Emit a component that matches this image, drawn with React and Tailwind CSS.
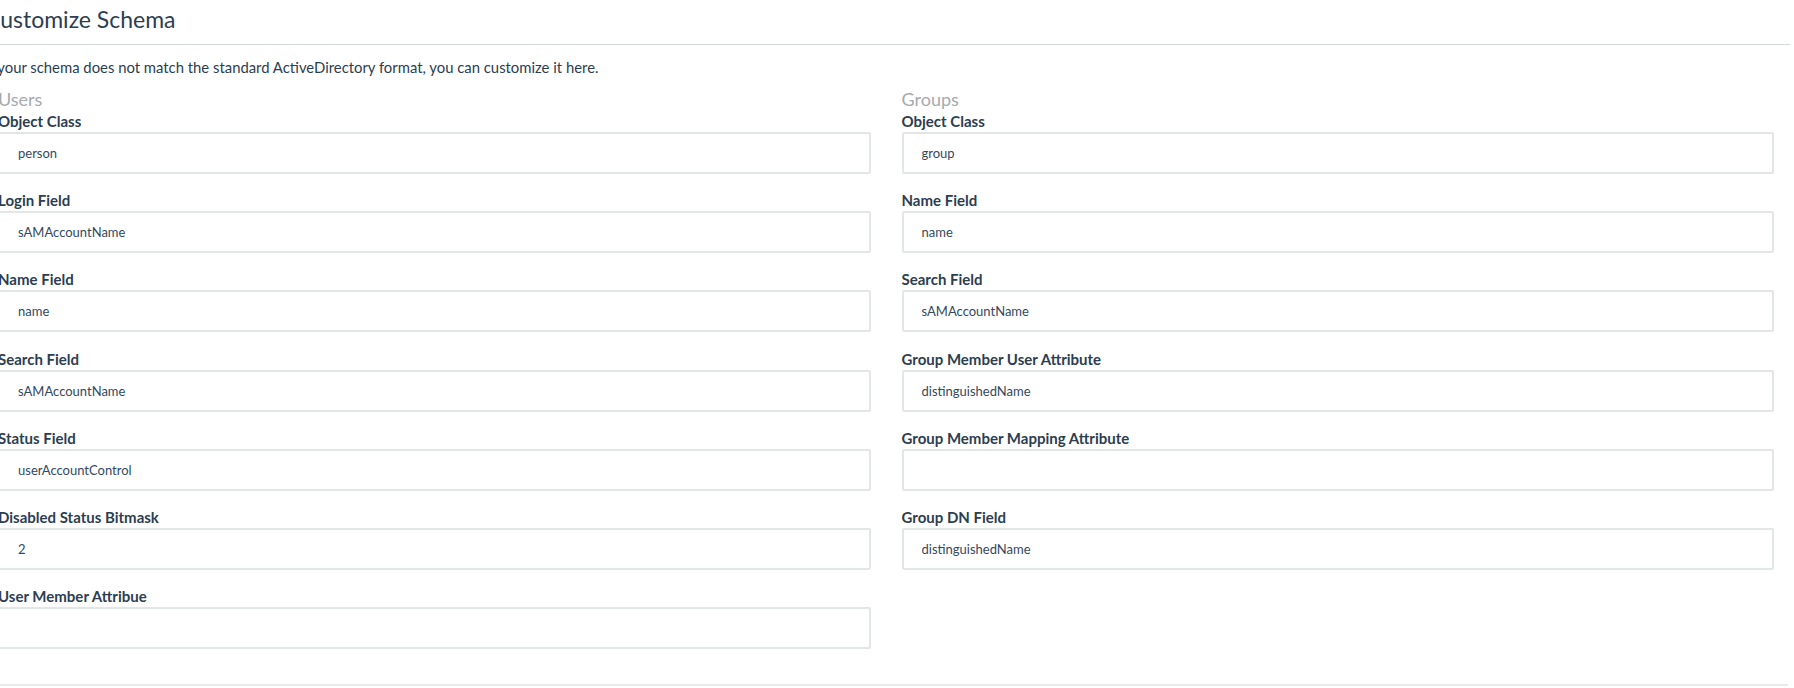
import React from "react";

const users = [
  { label: "Object Class", value: "person" },
  { label: "Login Field", value: "sAMAccountName" },
  { label: "Name Field", value: "name" },
  { label: "Search Field", value: "sAMAccountName" },
  { label: "Status Field", value: "userAccountControl" },
  { label: "Disabled Status Bitmask", value: "2" },
  { label: "User Member Attribue", value: "" },
];

const groups = [
  { label: "Object Class", value: "group" },
  { label: "Name Field", value: "name" },
  { label: "Search Field", value: "sAMAccountName" },
  { label: "Group Member User Attribute", value: "distinguishedName" },
  { label: "Group Member Mapping Attribute", value: "" },
  { label: "Group DN Field", value: "distinguishedName" },
];

const Field = ({ label, value }) => (
  <div className="flex flex-col mt-[1px] mb-[15.2px]">
    <label className="text-[15px] leading-[20px] font-bold text-[#2c3e50]">{label}</label>
    <input
      readOnly
      value={value}
      className="mt-[1px] w-full h-[42px] border-2 border-[#e3e6e6] rounded-[2px] px-[18px] text-[13px] text-[#34495e] bg-white outline-none"
    />
  </div>
);

const Column = ({ title, fields }) => (
  <div className="flex flex-col">
    <h3 className="text-[18px] leading-[22px] text-[#a5aaae] mt-[11px]">{title}</h3>
    {fields.map((f, i) => (
      <Field key={i} label={f.label} value={f.value} />
    ))}
  </div>
);

export default function App() {
  return (
    <div className="w-[1794px] h-[688px] overflow-hidden bg-white" style={{ fontFamily: "Lato, 'Open Sans', sans-serif" }}>
      <div className="-ml-[15px] w-[1805px]">
        <div className="mt-[6px] pb-[12px] border-b border-[#d5d8d8]">
          <h1 className="text-[23px] leading-[26px] text-[#2c3e50]">Customize Schema</h1>
        </div>
        <p className="mt-[12px] text-[14.85px] leading-[20px] text-[#2c3e50]">
          If your schema does not match the standard ActiveDirectory format, you can customize it here.
        </p>
        <div className="grid grid-cols-2 gap-x-[31px] pl-[13px] pr-[16px]">
          <Column title="Users" fields={users} />
          <Column title="Groups" fields={groups} />
        </div>
        <div className="mt-[20px] border-t-2 border-[#e8eaea] ml-[15px] w-[1788px]"></div>
      </div>
    </div>
  );
}
